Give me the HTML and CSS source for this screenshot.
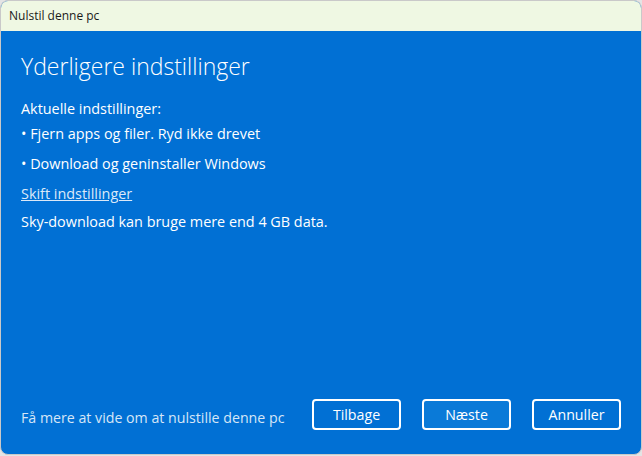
FILE: index.html
```html
<!DOCTYPE html>
<html lang="da">
<head>
    <meta charset="UTF-8">
    <title>Nulstil denne pc</title>
    <link rel="stylesheet" href="styles.css">
</head>
<body>
    <div class="window">
        <div class="titlebar">Nulstil denne pc</div>
        <div class="content">
            <h1 class="heading">Yderligere indstillinger</h1>
            <p class="line">Aktuelle indstillinger:</p>
            <p class="line">&bull; Fjern apps og filer. Ryd ikke drevet</p>
            <p class="line gap">&bull; Download og geninstaller Windows</p>
            <p class="line gap"><a class="link" href="#">Skift indstillinger</a></p>
            <p class="line last">Sky-download kan bruge mere end 4 GB data.</p>

            <div class="footer">
                <span class="learn">Få mere at vide om at nulstille denne pc</span>
                <div class="buttons">
                    <button class="btn">Tilbage</button>
                    <button class="btn primary">Næste</button>
                    <button class="btn">Annuller</button>
                </div>
            </div>
        </div>
    </div>
</body>
</html>
```

FILE: styles.css
```css
* {
    padding: 0;
    margin: 0;
    box-sizing: border-box;
}
body {
    background: #e4e4e4;
    font-family: "Open Sans", "Noto Sans", sans-serif;
    width: 642px;
    height: 456px;
}
.window {
    width: 642px;
    height: 455px;
    border: 1px solid #c9c9c9;
    border-radius: 8px;
    overflow: hidden;
    display: flex;
    flex-direction: column;
    background: #0170d4;
}
.titlebar {
    height: 30px;
    background: #eff8e3;
    color: #1a1a1a;
    font-size: 12px;
    line-height: 30px;
    padding-left: 8px;
}
.content {
    flex: 1;
    display: flex;
    flex-direction: column;
    padding: 19px 20px 24px 20px;
    color: #fff;
}
.heading {
    font-weight: 300;
    font-size: 23px;
    line-height: 32px;
    margin-bottom: 14px;
}
.line {
    font-size: 14.4px;
    line-height: 25px;
}
.gap {
    margin-top: 5px;
}
.last {
    margin-top: 3px;
}
.link {
    color: #dce9f8;
    text-decoration: underline;
}
.footer {
    margin-top: auto;
    display: flex;
    align-items: center;
    justify-content: space-between;
}
.learn {
    font-size: 14.2px;
    color: #d6e6f7;
    padding-top: 5px;
}
.buttons {
    display: flex;
    gap: 21px;
}
.btn {
    width: 89px;
    height: 31px;
    border: 2px solid #fff;
    border-radius: 4px;
    background: transparent;
    color: #fff;
    font-family: inherit;
    font-size: 14.2px;
}
.primary {
    background: #0a7ad8;
}
```
